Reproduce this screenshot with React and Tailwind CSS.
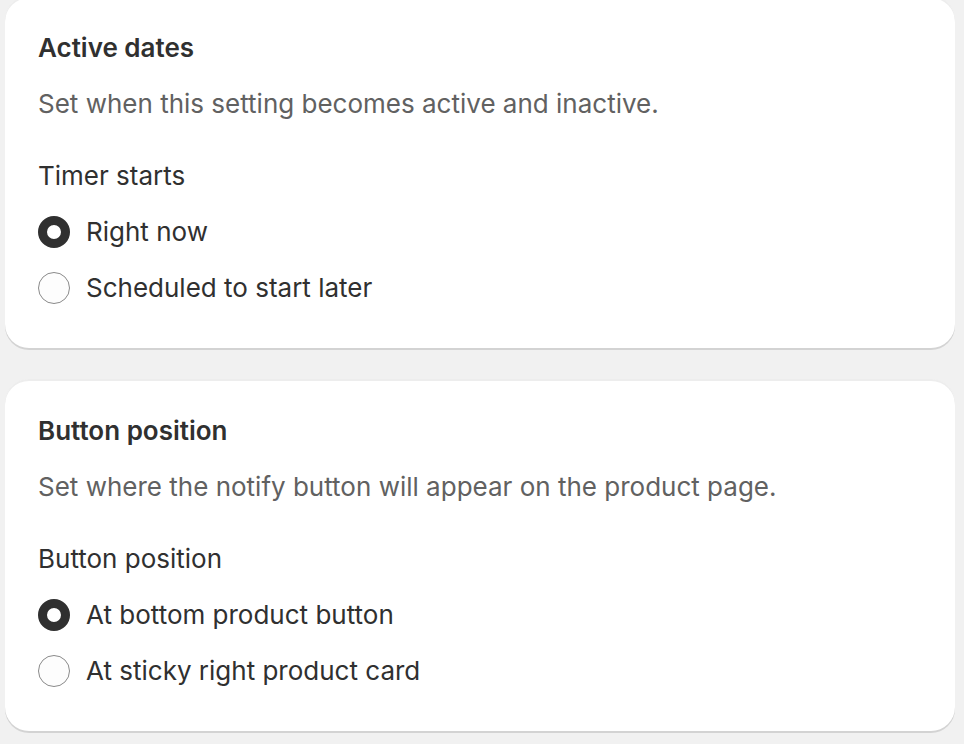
import React, { useState } from 'react';

const Radio = ({ checked, label, onClick }) => (
  <button type="button" onClick={onClick} className="flex h-10 items-center gap-4 text-left">
    <span
      className={`box-border h-8 w-8 shrink-0 rounded-full ${
        checked ? 'border-[9px] border-[#303030] bg-white' : 'border-[1.5px] border-[#8a8a8a] bg-[#fdfdfd]'
      }`}
    />
    <span className="text-[26px] leading-10 text-[#303030]">{label}</span>
  </button>
);

const SettingCard = ({ title, description, label, options }) => {
  const [selected, setSelected] = useState(0);

  return (
    <div className="rounded-3xl bg-white px-[33px] pt-8 pb-10 shadow-[0_2px_0_0_rgba(0,0,0,0.12),inset_0_2px_0_0_rgba(220,220,220,0.5)]">
      <h2 className="text-[26px] font-semibold leading-10 text-[#303030]">{title}</h2>
      <p className="mt-4 text-[26px] leading-10 text-[#616161]">{description}</p>
      <p className="mt-8 text-[26px] leading-10 text-[#303030]">{label}</p>
      <div className="mt-4 flex flex-col gap-4">
        {options.map((opt, i) => (
          <Radio key={opt} label={opt} checked={selected === i} onClick={() => setSelected(i)} />
        ))}
      </div>
    </div>
  );
};

export default function App() {
  return (
    <div className="min-h-[744px] overflow-hidden bg-[#f1f1f1] font-['Inter',sans-serif]">
      <div className="-mt-[4px] ml-[5px] flex w-[950px] flex-col gap-[31px]">
        <SettingCard
          title="Active dates"
          description="Set when this setting becomes active and inactive."
          label="Timer starts"
          options={['Right now', 'Scheduled to start later']}
        />
        <SettingCard
          title="Button position"
          description="Set where the notify button will appear on the product page."
          label="Button position"
          options={['At bottom product button', 'At sticky right product card']}
        />
      </div>
    </div>
  );
}
